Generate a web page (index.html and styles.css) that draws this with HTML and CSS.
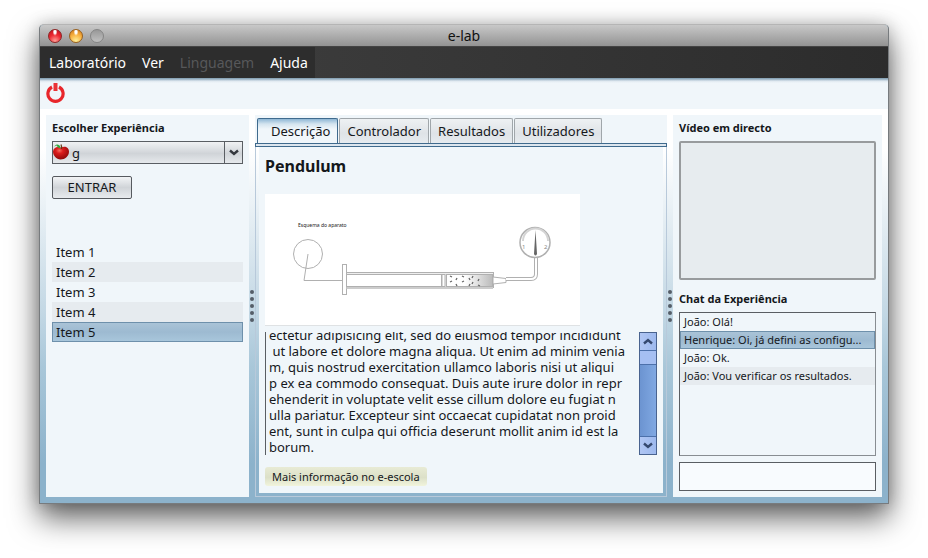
FILE: index.html
```html
<!DOCTYPE html>
<html lang="pt">
<head>
<meta charset="utf-8">
<title>e-lab</title>
<link rel="stylesheet" href="styles.css">
</head>
<body>
<main class="window">
  <header class="titlebar">
    <div class="lights">
      <button class="light red" aria-label="Fechar"></button>
      <button class="light amber" aria-label="Minimizar"></button>
      <button class="light gray" aria-label="Ampliar" disabled></button>
    </div>
    <h1 class="title">e-lab</h1>
  </header>
  <nav class="menubar">
    <div class="menus">
      <button class="menu">Laboratório</button>
      <button class="menu">Ver</button>
      <button class="menu" disabled>Linguagem</button>
      <button class="menu">Ajuda</button>
    </div>
  </nav>
  <div class="toolbar">
    <button class="power" aria-label="Desligar">
      <svg width="20" height="22" viewBox="0 0 20 22"><path d="M6 5A7.600 7.600 0 1 0 13 5" fill="none" stroke="#e8262b" stroke-width="3.200"/><rect x="7" y="1" width="5" height="9" fill="#f0f6fa"/><rect x="7.500" y="1" width="4" height="8" fill="#ea3236"/></svg>
    </button>
  </div>
  <div class="workspace">
    <section class="panel left">
      <label class="caption" for="experience">Escolher Experiência</label>
      <div class="combo">
        <select id="experience"><option>g</option></select>
        <svg class="apple" width="18" height="18" viewBox="0 0 18 18">
          <defs><radialGradient id="skin" cx=".4" cy=".3" r=".75"><stop offset="0" stop-color="#f56a5c"/><stop offset=".3" stop-color="#dc1c1c"/><stop offset="1" stop-color="#850606"/></radialGradient></defs>
          <path d="M9 4.500C5 3 1.500 4.500 1 8.500C1 12.500 4.500 16.500 8.500 16.500C13 16.500 17 13 17 8.500C17 4.500 13 2.500 9 4.500Z" fill="url(#skin)"/>
          <path d="M9.500 6Q10 4 9 1.500" fill="none" stroke="#6b3616" stroke-width="1.200"/>
          <path d="M8.500 5Q6 5.500 4.500 2.500Q1.500 3 1 5Q3.500 1 5.500 1.500Q8.500 2 8.500 5Z" fill="#35a83e"/>
        </svg>
        <span class="arrow"><svg width="10" height="7" viewBox="0 0 10 7"><path d="M1 1.500L5 5L9 1.500" fill="none" stroke="#34383e" stroke-width="2.400"/></svg></span>
      </div>
      <button class="enter">ENTRAR</button>
      <ul class="items">
        <li>Item 1</li>
        <li>Item 2</li>
        <li>Item 3</li>
        <li>Item 4</li>
        <li class="selected">Item 5</li>
      </ul>
    </section>
    <div class="splitter"><i></i><i></i><i></i><i></i><i></i></div>
    <section class="center">
      <div class="tabs" role="tablist">
        <button class="tab active" role="tab" aria-selected="true">Descrição</button>
        <button class="tab" role="tab">Controlador</button>
        <button class="tab" role="tab">Resultados</button>
        <button class="tab" role="tab">Utilizadores</button>
      </div>
      <div class="rule"></div>
      <div class="frame">
        <article class="page">
          <h2>Pendulum</h2>
          <svg class="figure" width="315" height="132" viewBox="0 0 315 132">
            <defs><linearGradient id="gas"><stop offset=".4" stop-color="#fff"/><stop offset="1" stop-color="#bbb"/></linearGradient></defs>
            <rect width="315" height="132" fill="#fff"/>
            <path d="M0 131.500H315" stroke="#dfe2e4"/>
            <text class="figure-title" x="33" y="33" fill="#222">Esquema do aparato</text>
            <g fill="none" stroke="#b0b0b0">
              <circle cx="43" cy="60" r="14.500"/>
              <path d="M43 60L39 86.500H77"/>
              <rect x="77.500" y="70.500" width="4" height="30" fill="#fff"/>
              <rect x="81.500" y="78.500" width="147" height="15" fill="#eee"/>
              <rect x="81.500" y="80.500" width="95" height="12" fill="#fff"/>
              <path d="M81.500 94H228" stroke="#ccc" stroke-width="2"/>
              <rect x="177" y="80.500" width="3" height="12" fill="#fff"/>
              <rect x="181.500" y="80.500" width="46" height="12" fill="url(#gas)"/>
              <path d="M228 83L241 84.500V88.500L228 90Z" fill="#fff"/>
              <path d="M241 85H266Q271 85 271 80V63" stroke-width="4"/>
              <path d="M241 85H266Q271 85 271 80V63" stroke="#fff" stroke-width="2"/>
              <circle cx="270" cy="48.500" r="15" fill="#fff" stroke-width="1.500"/>
              <path d="M258 47A12.500 12.500 0 0 1 283 47" stroke="#d4d4d4" stroke-width="2"/>
              <path d="M185 82l2 1M185 88l2-1M192 84l-1 2M191 90l1 2M197 82l2 1M197 88l2-1M204 84l1 2M205 90l-1 2M208 82l-1 2M208 88l-1 2M214 85l-1 2M213 91l2 1" stroke="#666" stroke-width="1.300"/>
            </g>
            <path d="M270.500 36L269 60Q270.500 63 272 60Z" fill="#666"/>
            <text class="dial" x="257" y="55" fill="#888">1</text>
            <text class="dial" x="279" y="55" fill="#888">2</text>
          </svg>
          <div class="reader">
            <div class="text"><p>ectetur adipisicing elit, sed do eiusmod tempor incididunt<br>&nbsp;ut labore et dolore magna aliqua. Ut enim ad minim venia<br>m, quis nostrud exercitation ullamco laboris nisi ut aliqui<br>p ex ea commodo consequat. Duis aute irure dolor in repr<br>ehenderit in voluptate velit esse cillum dolore eu fugiat n<br>ulla pariatur. Excepteur sint occaecat cupidatat non proid<br>ent, sunt in culpa qui officia deserunt mollit anim id est la<br>borum.</p></div>
            <div class="scrollbar">
              <button aria-label="Subir"><svg width="10" height="7" viewBox="0 0 10 7"><path d="M1 5.500L5 2L9 5.500" fill="none" stroke="#35496f" stroke-width="2.400"/></svg></button>
              <div class="thumb"></div>
              <div class="track"></div>
              <button aria-label="Descer"><svg width="10" height="7" viewBox="0 0 10 7"><path d="M1 1.500L5 5L9 1.500" fill="none" stroke="#35496f" stroke-width="2.400"/></svg></button>
            </div>
          </div>
          <button class="more">Mais informação no e-escola</button>
        </article>
      </div>
    </section>
    <div class="splitter"><i></i><i></i><i></i><i></i><i></i></div>
    <section class="panel right">
      <h3 class="caption">Vídeo em directo</h3>
      <div class="video"></div>
      <label class="caption" for="message">Chat da Experiência</label>
      <ul class="chat">
        <li>João: Olá!</li>
        <li class="selected">Henrique: Oi, já defini as configu...</li>
        <li>João: Ok.</li>
        <li>João: Vou verificar os resultados.</li>
      </ul>
      <input id="message" class="message" type="text">
    </section>
  </div>
</main>
</body>
</html>
```
FILE: styles.css
```css
* { box-sizing: border-box; }
body {
  margin: 0;
  height: 100vh;
  padding: 24px 39px 54px;
  display: flex;
  background: #fff;
  color: #15181c;
  font: 13px/16px "Noto Sans", "Open Sans", sans-serif;
  overflow: hidden;
}
button, input, select { font: inherit; color: inherit; margin: 0; padding: 0; border: 0; background: none; border-radius: 0; }
h1, h2, h3, p, ul { margin: 0; padding: 0; list-style: none; }
svg { display: block; }

.window {
  flex: 1;
  min-width: 0;
  display: flex;
  flex-direction: column;
  border: 1px solid #777b7e;
  border-top-color: #b5b5b5;
  border-radius: 5px 5px 0 0;
  box-shadow: 0 14px 30px rgba(0, 0, 0, .62), 0 0 16px rgba(0, 0, 0, .18);
  background: #8cb2cb;
}
.titlebar {
  height: 21px;
  display: grid;
  grid-template-columns: 1fr auto 1fr;
  align-items: center;
  padding: 0 8px;
  border-radius: 4px 4px 0 0;
  background: linear-gradient(#c8c8c8, #939393);
}
.title { font-size: 14px; font-weight: 400; line-height: 20px; color: #111; }
.lights { display: flex; gap: 7px; }
.light { width: 14px; height: 14px; border-radius: 50%; border: 1px solid #777; }
.red { border-color: #8d2525; background: radial-gradient(ellipse at 50% 15%, #fff 0 12%, transparent 28%), radial-gradient(circle at 50% 90%, #ff9d96, #ed2932 50%, #b90e1b); }
.amber { border-color: #98601d; background: radial-gradient(ellipse at 50% 15%, #fff 0 12%, transparent 28%), radial-gradient(circle at 50% 90%, #fff09a, #f9b443 50%, #cf7415); }
.gray { border-color: #858585; background: linear-gradient(#989898, #c0c0c0); }

.menubar { height: 32px; border-top: 1px solid #444; background: linear-gradient(90deg, #3b3b3b 30%, #2c2c2c); display: flex; }
.menus { display: flex; background: #2d2d2d; }
.menu { padding: 0 7px 0 9px; color: #fff; font-size: 14px; }
.menu:disabled { color: #57585a; }
.toolbar { height: 31px; padding: 4px 6px; background: linear-gradient(#7c99ac, #b4c7d6 2px, #dfe8ef 3px, #f0f6fa 5px); }
.power { display: block; }

.workspace {
  flex: 1;
  min-height: 0;
  display: flex;
  padding: 6px;
  background: linear-gradient(#fff 10%, #c2d7e4 52%, #a9c7d9 65%, #8cb2cb 90%);
}
.panel { background: #f0f6fa; padding: 6px; display: flex; flex-direction: column; }
.left { flex: 0 0 203px; }
.right { flex: 0 0 209px; }
.caption { font-size: 11px; font-weight: 700; line-height: 14px; margin-bottom: 6px; }
.splitter { flex: 0 0 6px; display: flex; flex-direction: column; align-items: center; justify-content: center; gap: 3px; }
.splitter i { width: 4px; height: 4px; border-radius: 50%; background: #555e68; }

.combo { position: relative; height: 23px; display: flex; }
.combo select {
  appearance: none;
  flex: 1;
  padding-left: 19px;
  border: 1px solid #5a5e63;
  background: linear-gradient(#f0f2f4, #d0d4d8 55%, #e6e9ec);
}
.apple { position: absolute; left: 0; top: 2px; pointer-events: none; }
.arrow { position: absolute; right: 0; top: 0; bottom: 0; width: 19px; display: grid; place-items: center; border: 1px solid #5a5e63; pointer-events: none; }
.enter {
  align-self: flex-start;
  width: 80px;
  height: 23px;
  padding-bottom: 2px;
  margin: 12px 0 43px;
  border: 1px solid #565a5f;
  border-radius: 2px;
  background: linear-gradient(#f2f4f6, #d0d4d8 50%, #e8ebee);
}
.items li { height: 20px; line-height: 20px; padding: 0 4px; }
.items li:nth-child(even), .chat li:nth-child(even) { background: #e6ebef; }
.items li.selected, .chat li.selected { border: 1px solid #6e90ab; background: linear-gradient(#a9c3d7, #9dbad1 50%, #a8c6db); }
.items li.selected { line-height: 18px; padding: 0 3px; }

.center { flex: 1; min-width: 0; display: flex; flex-direction: column; }
.tabs { display: flex; gap: 1px; padding: 3px 2px 0; background: #f0f6fa; }
.tab {
  height: 25px;
  padding: 0 7px;
  border: 1px solid #a0a6aa;
  border-bottom: 0;
  border-radius: 2px 2px 0 0;
  background: linear-gradient(#eef1f3, #dfe3e7 60%, #e6ebef);
}
.tab.active { padding-left: 13px; border-color: #3f6a8d; background: linear-gradient(#8fb7d5, #d4e4ef 5px, #f0f6fa 10px); }
.rule { height: 4px; border: 1px solid #3f6a8d; background: #dde6ee; }
.frame { flex: 1; min-height: 0; display: flex; padding: 0 3px 3px; border: 1px solid #b8c9da; border-top: 0; }
.page { flex: 1; min-width: 0; padding: 8px 6px 7px; display: flex; flex-direction: column; align-items: flex-start; background: #f0f6fa; }
.page h2 { font-size: 16px; line-height: 22px; font-weight: 700; margin-bottom: 17px; }
.figure { flex: none; margin-bottom: 6px; }
.figure-title { font-size: 5px; }
.dial { font-size: 6px; }
.reader { align-self: stretch; flex: 1; min-height: 0; display: flex; border-left: 1px solid #5a5e63; overflow: hidden; }
.text { flex: 1; min-width: 0; display: flex; align-items: flex-end; overflow: hidden; padding-left: 3px; white-space: nowrap; }
.scrollbar { flex: 0 0 18px; display: flex; flex-direction: column; border: 1px solid #49638f; }
.scrollbar button { height: 17px; display: grid; place-items: center; background: linear-gradient(90deg, #b0c6f3, #9db9ee); }
.thumb { height: 15px; border: solid #4c70aa; border-width: 1px 0; background: #a5bff2; }
.track { flex: 1; border-bottom: 1px solid #4c70aa; background: linear-gradient(90deg, #6c94d1, #80a8e2); }
.more { height: 19px; margin-top: 12px; padding: 0 7px; font-size: 11px; border-radius: 3px; background: linear-gradient(#e8ebd5, #dce0c8 55%, #f1f4dc); }

.video { height: 139px; margin-bottom: 12px; border: 2px solid #989b9d; border-radius: 2px; background: #e7ecef; }
.chat { flex: 1; border: 1px solid #5a5e63; border-right-color: #888d92; border-bottom-color: #888d92; font-size: 11px; white-space: nowrap; overflow: hidden; }
.chat li { height: 18px; line-height: 18px; padding: 0 4px; }
.chat li.selected { line-height: 16px; padding: 0 3px; }
.message { width: 100%; height: 29px; margin-top: 6px; padding: 0 4px; font-size: 11px; border: 1px solid #5a5e63; background: #f8fbfe; }
```
